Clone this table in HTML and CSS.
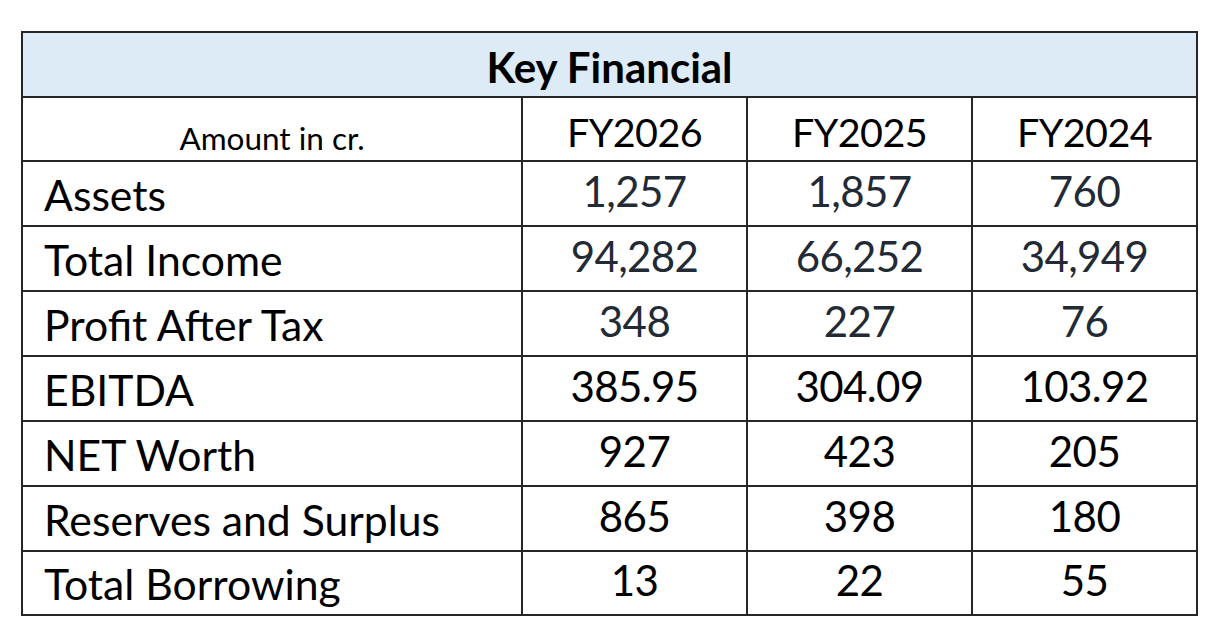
FILE: index.html
```html
<!DOCTYPE html>
<html lang="en">
<head>
<meta charset="utf-8">
<title>Key Financial</title>
<link rel="stylesheet" href="styles.css">
</head>
<body>
<div class="page">
  <table class="fin">
    <colgroup>
      <col class="c-label">
      <col class="c-year">
      <col class="c-year">
      <col class="c-year">
    </colgroup>
    <thead>
      <tr class="r-title"><th colspan="4" class="title">Key Financial</th></tr>
      <tr class="r-head">
        <th class="unit">Amount in cr.</th>
        <th class="year">FY2026</th>
        <th class="year">FY2025</th>
        <th class="year">FY2024</th>
      </tr>
    </thead>
    <tbody>
      <tr class="r1 soft"><td class="label">Assets</td><td class="num">1,257</td><td class="num">1,857</td><td class="num">760</td></tr>
      <tr class="r2 soft"><td class="label">Total Income</td><td class="num">94,282</td><td class="num">66,252</td><td class="num">34,949</td></tr>
      <tr class="r3 soft"><td class="label">Profit After Tax</td><td class="num">348</td><td class="num">227</td><td class="num">76</td></tr>
      <tr class="r4"><td class="label">EBITDA</td><td class="num">385.95</td><td class="num">304.09</td><td class="num">103.92</td></tr>
      <tr class="r5"><td class="label">NET Worth</td><td class="num">927</td><td class="num">423</td><td class="num">205</td></tr>
      <tr class="r6"><td class="label">Reserves and Surplus</td><td class="num">865</td><td class="num">398</td><td class="num">180</td></tr>
      <tr class="r7"><td class="label">Total Borrowing</td><td class="num">13</td><td class="num">22</td><td class="num">55</td></tr>
    </tbody>
  </table>
</div>
</body>
</html>
```

FILE: styles.css
```css
html, body {
  margin: 0;
  padding: 0;
  background: #ffffff;
}

.page {
  padding: 31px 0 0 21px;
}

.fin {
  border-collapse: collapse;
  table-layout: fixed;
  width: 1176px;
  font-family: Lato, "Liberation Sans", sans-serif;
  color: #000;
  border: 2px solid #1e1e1e;
}

.c-label { width: 500px; }
.c-year { width: 225px; }

.fin th, .fin td {
  border: 2px solid #262626;
  padding: 0;
  line-height: 1;
  vertical-align: bottom;
  font-weight: 400;
}

.r-title { height: 65px; }
.r-head { height: 64px; }
.r1, .r2, .r3, .r4, .r5, .r6 { height: 65px; }
.r7 { height: 64px; }

.title {
  background: #ddebf7;
  font-weight: 700 !important;
  font-size: 42px;
  text-align: center;
  padding-bottom: 8px !important;
}

.unit {
  font-size: 31.5px;
  text-align: center;
  padding-bottom: 6px !important;
}

.year {
  font-size: 39.5px;
  text-align: center;
  letter-spacing: -0.6px;
  padding-bottom: 9px !important;
}

.label {
  font-size: 42.7px;
  text-align: left;
  padding-left: 21px !important;
  padding-bottom: 8px !important;
}

.num {
  font-size: 42px;
  text-align: center;
  letter-spacing: -0.6px;
  padding-bottom: 13px !important;
}

.soft .num {
  color: #222a35;
}
```
